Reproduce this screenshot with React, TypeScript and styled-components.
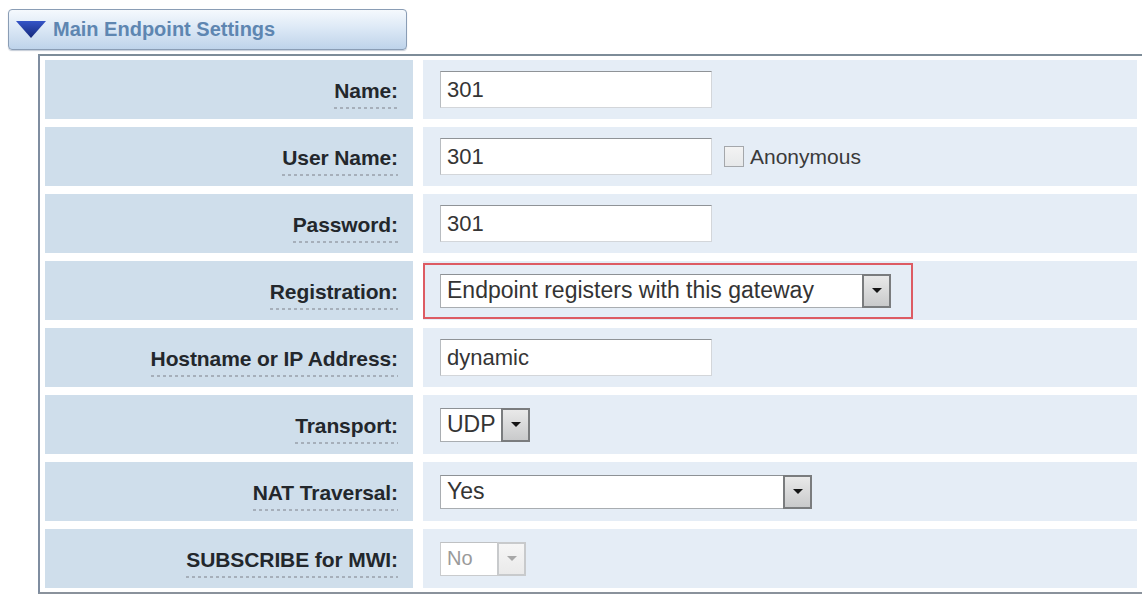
import React from "react";
import styled, { createGlobalStyle } from "styled-components";

const Global = createGlobalStyle`
  html, body { margin: 0; padding: 0; background: #ffffff; }
  body { font-family: "Liberation Sans", Arial, sans-serif; overflow: hidden; }
`;

const Page = styled.div`
  width: 1142px;
  height: 598px;
  padding: 9px 0 0 8px;
  box-sizing: border-box;
  display: flex;
  flex-direction: column;
  overflow: hidden;
`;

const Tab = styled.div`
  width: 399px;
  height: 41px;
  box-sizing: border-box;
  border: 1px solid #8a9db5;
  border-radius: 4px;
  background: linear-gradient(to bottom, #f5f9fd 0%, #dde9f6 45%, #bed3ea 100%);
  box-shadow: 0 1px 1px rgba(90, 110, 140, 0.35);
  display: flex;
  align-items: center;
  padding-left: 7px;
  gap: 7px;
`;

const TabTitle = styled.span`
  font-size: 20px;
  font-weight: bold;
  color: #5e86b1;
`;

const Panel = styled.div`
  margin: 4px 0 0 30px;
  width: 1106px;
  box-sizing: border-box;
  border-top: 2px solid #7d8c98;
  border-left: 2px solid #7f8da0;
  border-bottom: 2px solid #8a929c;
  padding: 4px 7px 4px 5px;
  display: flex;
  flex-direction: column;
  gap: 8px;
`;

const Row = styled.div`
  display: grid;
  grid-template-columns: 368px 1fr;
  column-gap: 10px;
  height: 59px;
`;

const LabelCell = styled.div`
  background: #cfdeeb;
  display: flex;
  align-items: center;
  justify-content: flex-end;
  padding-right: 15px;
`;

const Label = styled.span`
  font-size: 21px;
  font-weight: bold;
  color: #23272c;
  letter-spacing: -0.1px;
  padding-bottom: 6px;
  margin-top: 8px;
  background-image: repeating-linear-gradient(to right, #a6afba 0 3px, transparent 3px 6px);
  background-size: 100% 2px;
  background-repeat: no-repeat;
  background-position: left bottom;
`;

const ValueCell = styled.div`
  background: #e5edf6;
  display: flex;
  align-items: center;
  padding-left: 17px;
`;

const TextInput = styled.div`
  width: 272px;
  height: 37px;
  box-sizing: border-box;
  background: #ffffff;
  border: 1px solid #d3d6da;
  border-top-color: #8f9397;
  border-left-color: #b8bcc0;
  display: flex;
  align-items: center;
  padding-left: 6px;
  font-size: 22px;
  color: #353535;
`;

const CheckBox = styled.span`
  width: 20px;
  height: 21px;
  box-sizing: border-box;
  margin-left: 12px;
  border: 1px solid #a4a7ab;
  background: linear-gradient(to bottom, #f3f3f3, #e6e8ea);
`;

const CheckLabel = styled.span`
  margin-left: 6px;
  font-size: 21px;
  color: #3a3a3a;
`;

const Highlight = styled.div`
  margin-left: -17px;
  height: 56px;
  width: 490px;
  box-sizing: border-box;
  border: 2px solid #dd5b63;
  display: flex;
  align-items: center;
  padding-left: 15px;
`;

const SelectBox = styled.div<{ $w: number; $disabled?: boolean }>`
  width: ${(p) => p.$w}px;
  height: 34px;
  box-sizing: border-box;
  background: #ffffff;
  border: 1px solid ${(p) => (p.$disabled ? "#c9cbcd" : "#a9adb1")};
  border-top-color: ${(p) => (p.$disabled ? "#bfc1c3" : "#8d9195")};
  display: flex;
  align-items: stretch;
  font-size: ${(p) => (p.$disabled ? 20 : 23)}px;
  color: ${(p) => (p.$disabled ? "#9a9a9a" : "#343434")};
`;

const SelectValue = styled.span`
  flex: 1;
  display: flex;
  align-items: center;
  padding-left: 6px;
  white-space: nowrap;
  overflow: hidden;
`;

const ArrowButton = styled.span<{ $disabled?: boolean }>`
  width: 29px;
  box-sizing: border-box;
  border: 2px solid ${(p) => (p.$disabled ? "#c8cacc" : "#7a7c7e")};
  background: ${(p) =>
    p.$disabled
      ? "linear-gradient(to bottom, #f6f6f6, #eaeaea)"
      : "linear-gradient(to bottom, #e9e9e9, #c9cacb)"};
  display: flex;
  align-items: center;
  justify-content: center;
  margin: -1px -1px -1px 0;
`;

const Caret = styled.span<{ $disabled?: boolean }>`
  width: 0;
  height: 0;
  border-left: 5px solid transparent;
  border-right: 5px solid transparent;
  border-top: 5px solid ${(p) => (p.$disabled ? "#a8a8a8" : "#151515")};
`;

const TriangleIcon = () => (
  <svg width="30" height="17" viewBox="0 0 30 17">
    <defs>
      <linearGradient id="tri" x1="0" y1="0" x2="0" y2="1">
        <stop offset="0" stopColor="#3555c8" />
        <stop offset="1" stopColor="#14287a" />
      </linearGradient>
    </defs>
    <polygon points="0,0 30,0 15,17" fill="url(#tri)" />
  </svg>
);

type SelectProps = { value: string; width: number; disabled?: boolean };
const Select = ({ value, width, disabled }: SelectProps) => (
  <SelectBox $w={width} $disabled={disabled}>
    <SelectValue>{value}</SelectValue>
    <ArrowButton $disabled={disabled}>
      <Caret $disabled={disabled} />
    </ArrowButton>
  </SelectBox>
);

const Field = ({ label, children }: { label: string; children: React.ReactNode }) => (
  <Row>
    <LabelCell>
      <Label>{label}</Label>
    </LabelCell>
    <ValueCell>{children}</ValueCell>
  </Row>
);

export default function App() {
  return (
    <>
      <Global />
      <Page>
        <Tab>
          <TriangleIcon />
          <TabTitle>Main Endpoint Settings</TabTitle>
        </Tab>
        <Panel>
          <Field label="Name:">
            <TextInput>301</TextInput>
          </Field>
          <Field label="User Name:">
            <TextInput>301</TextInput>
            <CheckBox />
            <CheckLabel>Anonymous</CheckLabel>
          </Field>
          <Field label="Password:">
            <TextInput>301</TextInput>
          </Field>
          <Field label="Registration:">
            <Highlight>
              <Select value="Endpoint registers with this gateway" width={451} />
            </Highlight>
          </Field>
          <Field label="Hostname or IP Address:">
            <TextInput>dynamic</TextInput>
          </Field>
          <Field label="Transport:">
            <Select value="UDP" width={90} />
          </Field>
          <Field label="NAT Traversal:">
            <Select value="Yes" width={372} />
          </Field>
          <Field label="SUBSCRIBE for MWI:">
            <Select value="No" width={86} disabled />
          </Field>
        </Panel>
      </Page>
    </>
  );
}
